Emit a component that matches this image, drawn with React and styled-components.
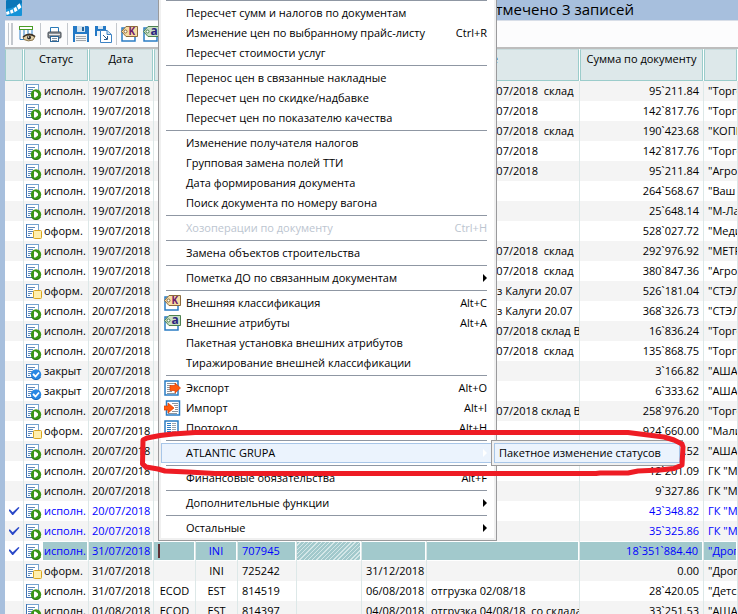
import React from "react";
import styled, { createGlobalStyle, css } from "styled-components";

const Global = createGlobalStyle`
  * { box-sizing: border-box; }
  html, body { margin: 0; }
  body { overflow: hidden; background: #fff; color: #000; font: 11px/20px "Open Sans", "Noto Sans", sans-serif; }
  button, input { font: inherit; color: inherit; margin: 0; padding: 0; border: 0; background: none; }
`;

const Page = styled.div`
  position: relative;
  height: 100vh;
  overflow: hidden;
  background: #fff;
`;
const TitleBar = styled.header`
  display: flex;
  justify-content: space-between;
  height: 20px;
  padding: 0 104px 0 6px;
  background: #a7bfdd;
`;
const Title = styled.h1`
  margin: 0;
  font-size: 15px;
  line-height: 18px;
  font-weight: 400;
`;
const Body = styled.main`
  border-left: 5px solid #a7bfdd;
`;
const Toolbar = styled.div`
  display: flex;
  align-items: center;
  height: 29px;
  padding-left: 3px;
  background: #fcfcfd;
  border-top: 1px solid #d8dee8;
  border-bottom: 2px solid #bdbdbd;
`;
const Grip = styled.span`
  width: 5px;
  height: 22px;
  margin-right: 3px;
  border: solid #c4c8ce;
  border-width: 0 2px 0 1px;
`;
const Divider = styled.span`
  width: 1px;
  height: 22px;
  margin: 0 2px;
  background: #c4c8ce;
`;
const ToolButton = styled.button`
  display: flex;
  align-items: center;
  justify-content: center;
  width: 22px;
  height: 24px;
`;

const Grid = styled.table`
  width: 100%;
  table-layout: fixed;
  border-spacing: 0;
`;
const Col = styled.col`
  width: ${(p) => (p.$w ? p.$w + "px" : "auto")};
`;
const Head = styled.th`
  height: 32px;
  padding: 0;
  font-weight: 400;
  line-height: 17px;
  text-align: center;
  vertical-align: top;
  border-right: 1px solid #fff;
`;
const HeadBox = styled.div`
  height: 32px;
  padding-right: ${(p) => (p.$end ? "80px" : "0")};
  text-align: ${(p) => (p.$end ? "right" : "center")};
  background: #dde8ea;
  border: 1px solid #9bcccb;
  border-top-color: #c9dcde;
  white-space: nowrap;
`;
const Row = styled.tr`
  color: ${(p) => (p.$marked ? "#0000ff" : "inherit")};
  &:nth-child(odd) { background: #f4f4f4; }
`;
const selectedFill = css`
  background: #a2c9cc;
  border: solid #fff;
  border-width: 1px 1px 1px 0;
`;
const hatchFill = css`
  background: repeating-linear-gradient(135deg, #a2c9cc 0 2px, #d4e7e8 2px 3px);
  border: solid #fff;
  border-width: 1px 1px 1px 0;
`;
const Cell = styled.td`
  height: 20px;
  padding: 0;
  border-right: 1px solid #dde8e8;
`;
const CellText = styled.div`
  height: 20px;
  line-height: ${(p) => (p.$fill ? "18px" : "20px")};
  padding: 0 4px;
  overflow: hidden;
  white-space: pre;
  text-align: ${(p) => p.$align || "left"};
  ${(p) => p.$fill === "solid" && selectedFill}
  ${(p) => p.$fill === "hatch" && hatchFill}
`;
const DateText = styled(CellText)`
  padding: 0 3px;
`;
const StatusCell = styled.div`
  display: flex;
  height: 20px;
  & > svg { flex: none; margin: 2px 1px 0; }
`;
const StatusText = styled(CellText)`
  flex: 1;
  padding: 0 0 0 1px;
`;
const Caret = styled.span`
  display: block;
  width: 2px;
  height: 14px;
  margin-top: 2px;
  background: #5c3236;
`;
const Tick = styled.input`
  appearance: none;
  display: block;
  width: 11px;
  height: 8px;
  margin: 0 auto;
  &:checked {
    background: #2a48c8;
    clip-path: polygon(0 40%, 12% 28%, 38% 66%, 90% 0, 100% 10%, 42% 100%, 34% 100%);
  }
`;

const Menu = styled.div`
  position: absolute;
  z-index: 2;
  left: 158px;
  top: -2px;
  width: 339px;
  padding: 0 2px 2px;
  background: #fff;
  border: 1px solid #9a9a9c;
  box-shadow: inset 2px 0 #f0f0f0, inset -2px 0 #f0f0f0, inset 0 -2px #f0f0f0;
`;
const Separator = styled.hr`
  height: 5px;
  margin: 0 7px 0 5px;
  border: 0;
  background: linear-gradient(#8f97a3, #8f97a3) 0 2px / 100% 1px no-repeat;
  &:first-child { height: 4px; background-position: 0 1px; }
`;
const MenuItem = styled.button`
  display: flex;
  align-items: center;
  width: 100%;
  height: 20px;
  padding: 0 7px 0 3px;
  line-height: 18px;
  text-align: left;
  color: ${(p) => (p.disabled ? "#bcc5d0" : "inherit")};
  ${(p) => p.$active && css`
    background: #ebf3fd;
    box-shadow: inset 0 0 0 1px #a8c6e8;
  `}
`;
const IconSlot = styled.span`
  display: flex;
  width: 22px;
  flex: none;
`;
const ItemLabel = styled.span`
  flex: 1;
  white-space: nowrap;
`;
const Submenu = styled.div`
  position: absolute;
  z-index: 3;
  left: 491px;
  top: 440px;
  width: 192px;
  padding: 2px;
  background: #f0f0f0;
  border: 1px solid #9a9a9c;
`;
const SubmenuItem = styled.button`
  width: 100%;
  height: 20px;
  padding: 0 0 0 5px;
  line-height: 18px;
  text-align: left;
  white-space: nowrap;
  background: #ebf3fd;
  box-shadow: inset 0 0 0 1px #a8c6e8;
`;
const Marker = styled.svg`
  position: absolute;
  z-index: 4;
  left: 138px;
  top: 425px;
  pointer-events: none;
`;

const AppIcon = () => (
  <svg width="16" height="16" viewBox="0 0 16 16">
    <rect width="16" height="16" rx="1" fill="#1593d8" />
    <path d="M0 1L1 0H15L16 1V3Q8 8 0 9Z" fill="#0b76b8" />
    <path d="M0 12l3-1 .6 3L.6 15zM4 10.500l2.600-1.200 1 3.500-2.800 1zM7.500 8.500l2.500-1.800 1.600 3.800-2.900 1.700zM10.800 5.800l2.700-2.600 2 4-3 2.600z" fill="#fff" />
  </svg>
);
const TableEyeIcon = () => (
  <svg width="17" height="18" viewBox="0 0 17 18">
    <path d="M1 5V14.500H5M5 5V14M9 5V9M13 5V9" fill="none" stroke="#2f80c8" />
    <rect x=".5" y="1.500" width="13" height="3" fill="#fff" stroke="#4a9c28" />
    <path d="M4 12.500Q9 7 16 11.500L14 15Q9 17 5 14.500Z" fill="#dfcda4" stroke="#8a744c" />
    <path d="M4 12Q10 7 16 11.500" fill="none" stroke="#3b3025" strokeWidth="1.500" />
    <circle cx="10" cy="12.500" r="2" fill="#222" /><circle cx="9.500" cy="12" r=".8" fill="#fff" />
  </svg>
);
const PrinterIcon = () => (
  <svg width="15" height="15" viewBox="0 0 15 15">
    <path d="M3.500 5V.5h8V5" fill="#fff" stroke="#2b7ab8" />
    <rect x="1" y="5" width="13" height="6" rx="1" fill="#8c9298" stroke="#454b52" />
    <path d="M2 7.500h11" stroke="#e6e8ea" />
    <rect x="3.500" y="9.500" width="8" height="5" fill="#fff" stroke="#2b6698" />
    <path d="M5 11.500h5M5 13.500h5" stroke="#8090a0" />
  </svg>
);
const SaveIcon = () => (
  <svg width="16" height="16" viewBox="0 0 16 16">
    <path d="M0 0H15L16 1V16H0Z" fill="#2479c6" />
    <rect x="4" width="8" height="6" fill="#cfe0ee" /><rect x="9" y="1" width="2" height="4" fill="#24639c" />
    <rect x="2" y="8" width="12" height="8" fill="#f5f5f5" />
    <path d="M3 10.500h10M3 12.500h10M3 14.500h10" stroke="#a0a6ad" />
  </svg>
);
const CopyIcon = () => (
  <svg width="17" height="17" viewBox="0 0 17 17">
    <path d="M0 0H11V10H0Z" fill="#2479c6" /><rect x="3" width="5" height="3" fill="#d6e5f2" /><rect x="2" y="5" width="6" height="5" fill="#edf2f7" />
    <path d="M5.500 4.500H12L16.500 8.500V16.500H5.500Z" fill="#fff" stroke="#3c82c4" />
    <path d="M12 4.500V8.500H16" fill="#cde0f0" stroke="#3c82c4" />
    <path d="M8 9l4 4M12.500 10V13.500H9" fill="none" stroke="#26588c" />
  </svg>
);
const TagIcon = ({ green, letter }) => (
  <svg width="18" height="16" viewBox="0 0 18 16">
    <rect x="1" y="2" width="13" height="13" fill="#fff" stroke="#2a7cc4" strokeWidth="1.500" />
    <path d="M.5 5.500L5 .5H16.500V10.500H5Z" fill={green ? "#c9dfc4" : "#f8dca4"} stroke={green ? "#4d8050" : "#8b6a3c"} />
    <circle cx="4.500" cy="5.500" r="1.500" fill="#fff" stroke={green ? "#4d8050" : "#8b6a3c"} />
    <text x="7.500" y="9" fontFamily="Open Sans" fontSize={green ? 12 : 10} fontWeight="700" fill={green ? "#2b2480" : "#70206c"}>{letter}</text>
  </svg>
);
const ListIcon = ({ arrow }) => (
  <svg width="17" height="16" viewBox="0 0 17 16">
    <rect x={arrow === "in" ? 2.5 : 1} y="1" width="13" height="14" fill="#fff" stroke="#2a7cc4" strokeWidth="1.500" />
    {arrow ? (
      <>
        <path d={arrow === "in" ? "M8 3.500h6M10 5.500h4M11 7.500h3M11 9.500h3M8 11.500h6M4 13.500h9" : "M3 3.500h9M3 5.500h4M3 7.500h3M3 9.500h3M3 11.500h5M3 13.500h9"} stroke="#8c949c" />
        <path d={arrow === "in" ? "M0 6H4V3L10 8 4 13V10H0Z" : "M6 5.500H11V3L16.500 8 11 13V10.500H6Z"} fill="#ff5a10" stroke="#d83c00" strokeWidth=".7" />
      </>
    ) : (
      <>
        <path d="M3 3.500h4M3 5.500h4M3 7.500h4M3 9.500h4M3 11.500h4" stroke="#2a7cc4" />
        <path d="M8 3.500h4M8 5.500h4M8 7.500h4M8 9.500h4M8 11.500h4" stroke="#9aa4ae" />
      </>
    )}
  </svg>
);
const MENU_ICONS = {
  k: <TagIcon letter="K" />,
  a: <TagIcon green letter="a" />,
  out: <ListIcon arrow="out" />,
  in: <ListIcon arrow="in" />,
  list: <ListIcon />,
};
const Arrow = ({ light }) => (
  <svg width="4" height="8" viewBox="0 0 4 8"><path d="M0 0L4 4 0 8Z" fill={light ? "#fff" : "#000"} /></svg>
);
const StatusIcon = ({ kind }) => (
  <svg width="17" height="17" viewBox="0 0 17 17">
    <rect x="1.500" y="1.500" width="12" height="13" fill="#fff" stroke="#76a4d0" />
    <path d="M1.500 1V14.500H13" fill="none" stroke="#3f74b4" />
    <path d="M3 4.500h7M3 6.500h5M3 8.500h6M3 10.500h4M3 12.500h2" stroke="#5b87bb" />
    {kind === "оформ." && <rect x="8.500" y="7.500" width="8" height="8" rx="1" fill="#ffefae" stroke="#d9a520" />}
    {kind === "исполн." && (
      <>
        <circle cx="11" cy="11.500" r="5.200" fill="#3a9616" />
        <path d="M6.500 14A5.200 5.200 0 0 0 15.500 14" fill="none" stroke="#2b7412" />
        <path d="M9 8.500H10.500L13 10.500V12.500L10.500 14.500H9Z" fill="#fff" />
      </>
    )}
    {kind === "закрыт" && (
      <>
        <circle cx="11" cy="11.500" r="5.200" fill="#2988e4" />
        <path d="M6.500 14A5.200 5.200 0 0 0 15.500 14" fill="none" stroke="#1668b8" />
        <path d="M8 11l2.500 2.500L14 9.500" fill="none" stroke="#fff" strokeWidth="1.800" />
      </>
    )}
  </svg>
);

const I = "исполн.", O = "оформ.", Z = "закрыт";
const SHIP = "отгрузка 19/07/2018", SHIPW = "отгрузка 19/07/2018  склад";
const D1 = "19/07/2018", D2 = "20/07/2018", D3 = "31/07/2018";
const ROWS = [
  [I, D1, SHIPW, "95`211.84", "\"Торговый"],
  [I, D1, SHIP, "142`817.76", "\"Торговый"],
  [I, D1, SHIPW, "190`423.68", "\"КОПЕЙКА"],
  [I, D1, SHIP, "142`817.76", "\"Торговый"],
  [I, D1, SHIP, "95`211.84", "\"Агроторг"],
  [I, D1, "", "264`568.67", "\"Ваш дом"],
  [I, D1, "", "25`648.14", "\"М-Лайн"],
  [O, D1, "", "528`027.72", "\"Медиа"],
  [I, D1, SHIPW, "292`976.92", "\"МЕТРО"],
  [I, D1, SHIPW, "380`847.36", "\"Агроторг"],
  [O, D2, "доставка    из Калуги 20.07", "526`181.04", "\"СТЭЛС"],
  [I, D2, "доставка    из Калуги 20.07", "368`326.73", "\"СТЭЛС"],
  [I, D2, "отгрузка 20/07/2018 склад В", "16`836.24", "\"Торговый"],
  [I, D2, "отгрузка 20/07/2018  склад", "135`868.75", "\"Торговый"],
  [Z, D2, "", "3`166.82", "\"АШАН\""],
  [Z, D2, "", "6`333.62", "\"АШАН\""],
  [I, D2, "отгрузка 20/07/2018 склад В", "258`976.20", "\"Торговый"],
  [O, D2, "", "924`660.00", "\"Малина"],
  [I, D2, "", "13`874.52", "\"АШАН\""],
  [I, D2, "", "12`201.09", "ГК \"Март"],
  [I, D2, "", "9`327.86", "ГК \"Март"],
  [I, D2, "", "43`348.82", "ГК \"Март", true],
  [I, D2, "", "35`325.86", "ГК \"Март", true],
  [I, D3, "", "18`351`884.40", "\"Дрогери", true, ["", "INI", "707945", "", ""]],
  [O, D3, "", "0.00", "\"Дрогери", false, ["", "INI", "725242", "", "31/12/2018"]],
  [I, D3, "отгрузка 02/08/18", "28`420.05", "\"Детский", false, ["ECOD", "EST", "814519", "", "06/08/2018"]],
  [I, "01/08/2018", "отгрузка 04/08/18  со склада", "33`251.53", "\"АШАН\"", false, ["ECOD", "EST", "814397", "", "04/08/2018"]],
];
const NO_CODES = ["", "", "", "", ""];
const COLUMNS = [
  { w: 19 },
  { w: 65, t: "Статус" },
  { w: 65, t: "Дата" },
  { w: 42 },
  { w: 42 },
  { w: 59 },
  { w: 65 },
  { w: 65 },
  { w: 153, t: "Примечание", end: true },
  { w: 124, t: "Сумма по документу" },
  {},
];

const MENU = [
  "-",
  { t: "Пересчет сумм и налогов по документам" },
  { t: "Изменение цен по выбранному прайс-листу", k: "Ctrl+R" },
  { t: "Пересчет стоимости услуг" },
  "-",
  { t: "Перенос цен в связанные накладные" },
  { t: "Пересчет цен по скидке/надбавке" },
  { t: "Пересчет цен по показателю качества" },
  "-",
  { t: "Изменение получателя налогов" },
  { t: "Групповая замена полей ТТИ" },
  { t: "Дата формирования документа" },
  { t: "Поиск документа по номеру вагона" },
  "-",
  { t: "Хозоперации по документу", k: "Ctrl+H", off: true },
  "-",
  { t: "Замена объектов строительства" },
  "-",
  { t: "Пометка ДО по связанным документам", sub: true },
  "-",
  { t: "Внешняя классификация", k: "Alt+C", i: "k" },
  { t: "Внешние атрибуты", k: "Alt+A", i: "a" },
  { t: "Пакетная установка внешних атрибутов" },
  { t: "Тиражирование внешней классификации" },
  "-",
  { t: "Экспорт", k: "Alt+O", i: "out" },
  { t: "Импорт", k: "Alt+I", i: "in" },
  { t: "Протокол", k: "Alt+H", i: "list" },
  "-",
  { t: "ATLANTIC GRUPA", sub: true, active: true },
  "-",
  { t: "Финансовые обязательства", k: "Alt+F" },
  "-",
  { t: "Дополнительные функции", sub: true },
  "-",
  { t: "Остальные", sub: true },
];

function DocumentRow({ data }) {
  const [status, date, note, sum, partner, marked, codes = NO_CODES] = data;
  const current = marked && codes !== NO_CODES;
  const fill = current ? "solid" : undefined;
  return (
    <Row $marked={marked} aria-selected={current}>
      <Cell>{marked && <Tick type="checkbox" defaultChecked aria-label={"Отметить " + date} />}</Cell>
      <Cell>
        <StatusCell>
          <StatusIcon kind={status} />
          <StatusText $fill={fill}>{status}</StatusText>
        </StatusCell>
      </Cell>
      <Cell><DateText $fill={fill}>{date}</DateText></Cell>
      {codes.map((code, i) => (
        <Cell key={i}>
          <CellText $fill={current && i === 3 ? "hatch" : fill} $align={i < 2 ? "center" : "left"}>
            {current && i === 0 ? <Caret /> : code}
          </CellText>
        </Cell>
      ))}
      <Cell><CellText $fill={fill}>{note}</CellText></Cell>
      <Cell><CellText $fill={fill} $align="right">{sum}</CellText></Cell>
      <Cell><CellText $fill={fill}>{partner}</CellText></Cell>
    </Row>
  );
}

export default function App() {
  return (
    <Page>
      <Global />
      <TitleBar>
        <AppIcon />
        <Title>Отмечено 3 записей</Title>
      </TitleBar>
      <Body>
        <Toolbar role="toolbar">
          <Grip />
          <ToolButton aria-label="Вид"><TableEyeIcon /></ToolButton>
          <Divider />
          <ToolButton aria-label="Печать"><PrinterIcon /></ToolButton>
          <Divider />
          <ToolButton aria-label="Сохранить"><SaveIcon /></ToolButton>
          <ToolButton aria-label="Копировать"><CopyIcon /></ToolButton>
          <Divider />
          <ToolButton aria-label="Классификация"><TagIcon letter="K" /></ToolButton>
          <ToolButton aria-label="Атрибуты"><TagIcon green letter="a" /></ToolButton>
        </Toolbar>
        <Grid>
          <colgroup>{COLUMNS.map((c, i) => <Col key={i} $w={c.w} />)}</colgroup>
          <thead>
            <tr>
              {COLUMNS.map((c, i) => (
                <Head key={i} scope="col"><HeadBox $end={c.end}>{c.t}</HeadBox></Head>
              ))}
            </tr>
          </thead>
          <tbody>{ROWS.map((r, i) => <DocumentRow key={i} data={r} />)}</tbody>
        </Grid>
      </Body>
      <Menu role="menu">
        {MENU.map((m, i) => m === "-" ? <Separator key={i} /> : (
          <MenuItem key={i} role="menuitem" disabled={m.off} $active={m.active} aria-haspopup={m.sub}>
            <IconSlot>{MENU_ICONS[m.i]}</IconSlot>
            <ItemLabel>{m.t}</ItemLabel>
            {m.k}
            {m.sub && <Arrow light={m.active} />}
          </MenuItem>
        ))}
      </Menu>
      <Submenu role="menu">
        <SubmenuItem role="menuitem">Пакетное изменение статусов</SubmenuItem>
      </Submenu>
      <Marker width="552" height="54" viewBox="0 0 552 54">
        <path d="M5 15L9 13 22 10.500 35 9 57 7.500H490L510 10 526 12 536 15 544 19 545 22 544 40 536 43.500 522 45 500 46 490 48H462L458 48.500H77L50 47 27 46 20 44 8 42 4.500 39Z" fill="none" stroke="#ee1c24" strokeWidth="5" strokeLinejoin="round" />
      </Marker>
    </Page>
  );
}
